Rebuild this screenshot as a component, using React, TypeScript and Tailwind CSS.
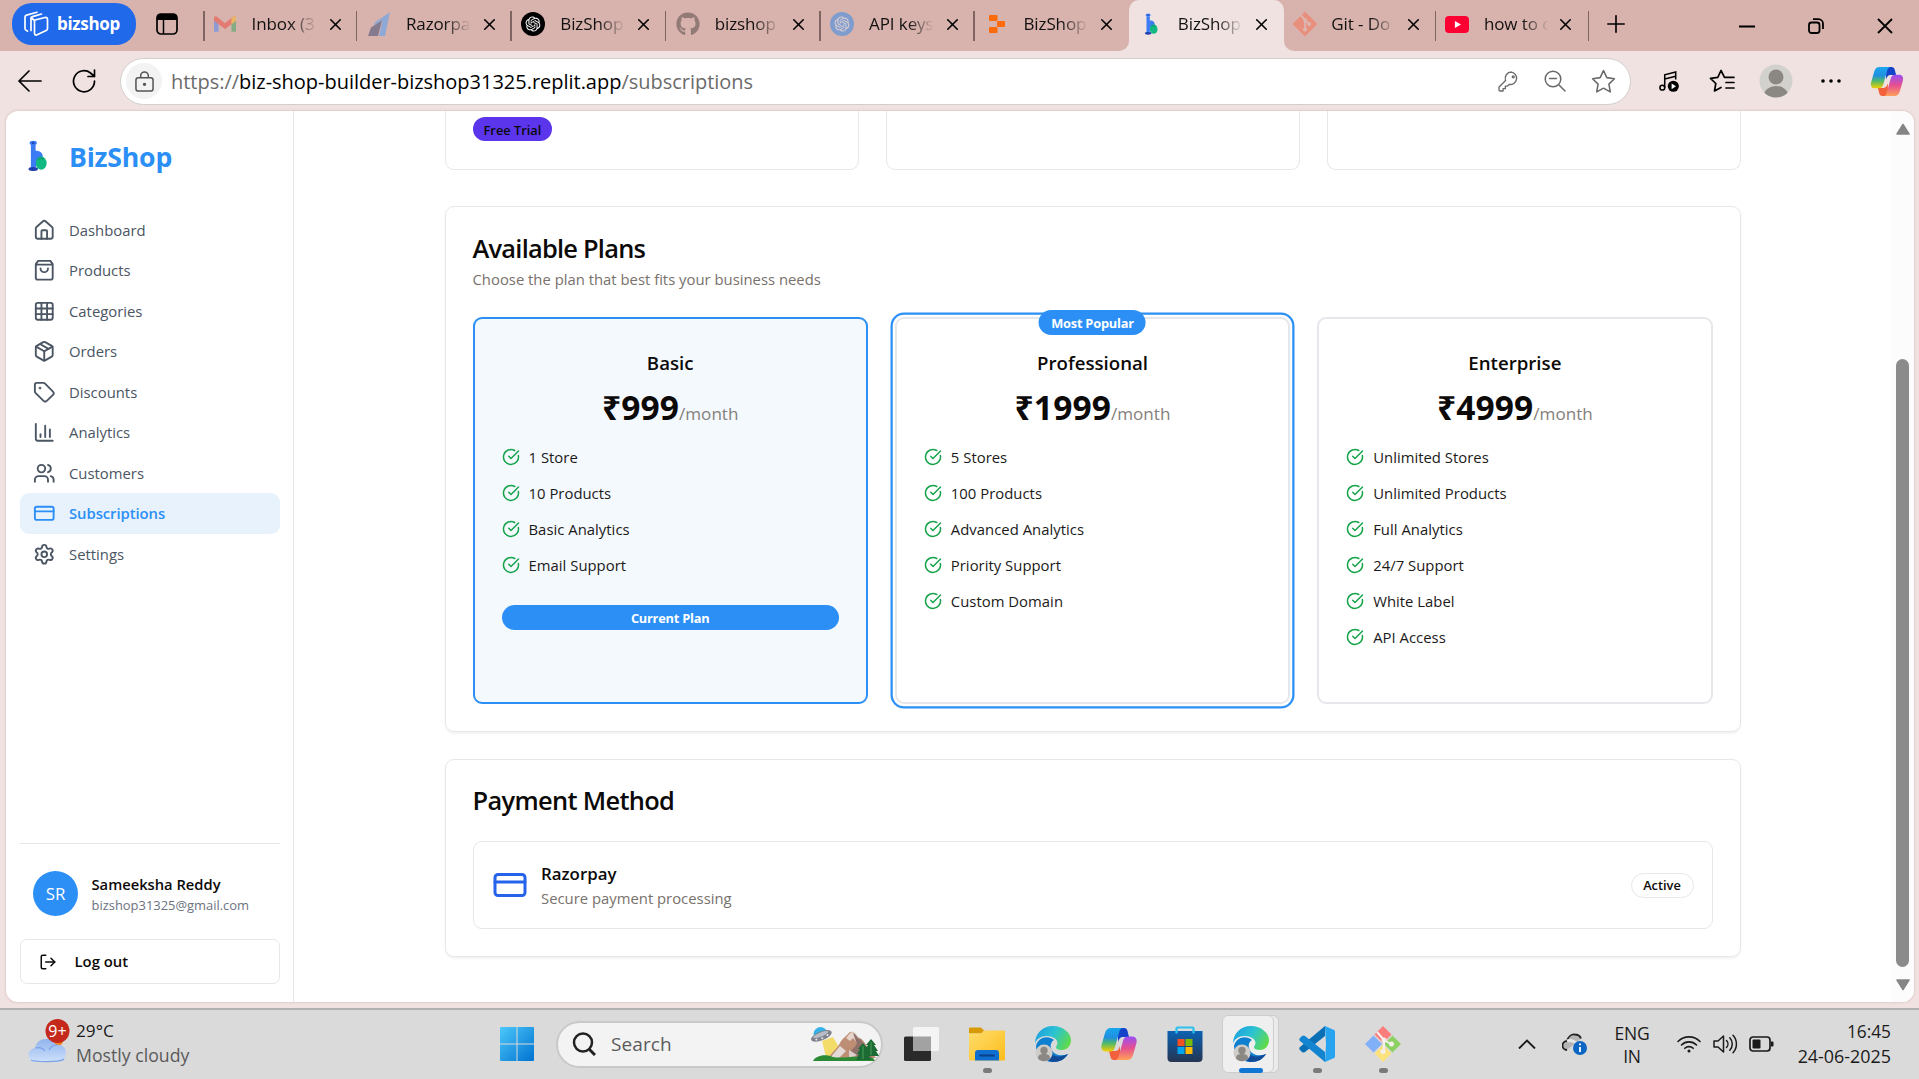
import type { ReactNode } from "react";
import {
  House,
  Grid3x3,
  Package,
  Tag,
  Users,
  CreditCard,
  Settings,
  LogOut,
  CircleCheckBig,
  Plus,
  X,
  type LucideIcon,
} from "lucide-react";
import { FaGithub } from "react-icons/fa";
import { RiOpenaiFill } from "react-icons/ri";

/* ---------- shared drawings ---------- */

function BizLogo({ className }: { className?: string }) {
  return (
    <svg viewBox="0 0 32 32" className={className}>
      <path d="M12 11c6-1 9 3 8 9l-8 8z" fill="#3b7cf5" />
      <ellipse cx="18.500" cy="23.500" rx="5.500" ry="6.800" fill="#10b981" />
      <path d="M15 20c2-2.500 4.500-2 5.500 0" stroke="#0a8f63" strokeWidth="1.200" fill="none" />
      <rect x="8" y="5" width="4.800" height="24" fill="#3b7cf5" />
      <ellipse cx="10.400" cy="3" rx="3.700" ry="2.300" fill="#3b7cf5" />
      <ellipse cx="10.400" cy="3" rx="1.500" ry="1" fill="#1e40af" />
      <ellipse cx="10.400" cy="29.500" rx="4.800" ry="2" fill="#1e40af" />
    </svg>
  );
}

function CopilotLogo({ className, id }: { className?: string; id: string }) {
  return (
    <svg viewBox="0 0 36 34" className={className}>
      <defs>
        <linearGradient id={id + "a"} x1="0" y1="0" x2="0" y2="1">
          <stop offset="0" stopColor="#19a7ef" />
          <stop offset=".4" stopColor="#1f8fe0" />
          <stop offset=".65" stopColor="#4fb86c" />
          <stop offset="1" stopColor="#f5d000" />
        </linearGradient>
        <linearGradient id={id + "b"} x1="0" y1="0" x2="0" y2="1">
          <stop offset="0" stopColor="#9a4df5" />
          <stop offset=".5" stopColor="#e6508f" />
          <stop offset="1" stopColor="#ffa257" />
        </linearGradient>
      </defs>
      <path d="M17 1h6c2 0 3 1 3.500 3l1.500 6h-6c-3 0-4 2-5 5z" fill="#1443c9" />
      <path d="M19 33h-6c-2 0-3-1-3.500-3L8 24h6c3 0 4-2 5-5z" fill="#f2603c" />
      <path d="M10 1h12c-2 0-3 1.500-3.600 3.500L14 20c-.8 3-2 4.500-5 4.500H5c-4 0-5.500-3-4.300-7L4 6c1-3.500 3-5 6-5z" fill={"url(#" + id + "a)"} />
      <path d="M26 33H14c2 0 3-1.500 3.600-3.500L22 14c.8-3 2-4.500 5-4.500h4c4 0 5.500 3 4.300 7L32 28c-1 3.500-3 5-6 5z" fill={"url(#" + id + "b)"} />
    </svg>
  );
}

/* ---------- browser tab strip ---------- */

function GmailIcon() {
  return (
    <svg viewBox="0 0 24 18" className="h-[17px] w-[22px] opacity-60">
      <path d="M0 2v15h5V7z" fill="#5b8def" />
      <path d="M24 2v15h-5V7z" fill="#4fa868" />
      <path d="M0 2c0-2 2.500-2.500 4-1l8 6.500L20 1c1.500-1.500 4-1 4 1v3l-12 9L0 5z" fill="#e9574a" />
      <path d="M19 2l1-1c1.500-1.500 4-1 4 1v3l-5 4z" fill="#f5b93a" />
    </svg>
  );
}

function RazorpayIcon() {
  return (
    <svg viewBox="0 0 22 24" className="h-6 w-[22px]">
      <path d="M22 0L7 10.500 6 14l8.500-5.500L11 24h6z" fill="#8fa9d6" />
      <path d="M3 15.500L0 24h10l4-15.500z" fill="#857b8e" />
    </svg>
  );
}

function OpenAiIcon({ blue }: { blue?: boolean }) {
  return (
    <span
      className={
        blue
          ? "flex size-6 items-center justify-center rounded-full bg-[#7e9dce] text-[#e3d0d2]"
          : "flex size-6 items-center justify-center rounded-full bg-black text-white"
      }
    >
      <RiOpenaiFill className="size-[18px]" />
    </span>
  );
}

function ReplitIcon() {
  return (
    <svg viewBox="0 0 16 18" className="ml-[2px] h-[18px] w-[16px]" fill="#fb6a0b">
      <rect width="8.500" height="6" rx="1" />
      <rect x="8" y="6" width="8" height="6" rx="1" />
      <rect y="12" width="8.500" height="6" rx="1" />
    </svg>
  );
}

function GitIcon() {
  return (
    <svg viewBox="0 0 24 24" className="size-6">
      <path d="M12 0l12 12-12 12L0 12z" fill="#e98f7d" stroke="#e98f7d" strokeLinejoin="round" />
      <g stroke="#dcb6b0" strokeWidth="1.800" fill="#dcb6b0">
        <path d="M8 3.500l4 4v10M12 8l4 4" fill="none" />
        <circle cx="12" cy="17.500" r="1.200" />
        <circle cx="16" cy="12" r="1.200" />
        <circle cx="12" cy="8" r="1" />
      </g>
    </svg>
  );
}

function YoutubeIcon() {
  return (
    <span className="flex h-[17px] w-6 items-center justify-center rounded-[4px] bg-[#ff0033]">
      <svg viewBox="0 0 8 8" className="size-[7px]">
        <path d="M1 0l7 4-7 4z" fill="#fff" />
      </svg>
    </span>
  );
}

type TabInfo = { title: string; icon: ReactNode; active?: boolean; narrow?: boolean };

const tabs: TabInfo[] = [
  { title: "Inbox (3", icon: <GmailIcon /> },
  { title: "Razorpa", icon: <RazorpayIcon /> },
  { title: "BizShop", icon: <OpenAiIcon /> },
  { title: "bizshop", icon: <FaGithub className="size-6 text-[#927a76]" /> },
  { title: "API keys", icon: <OpenAiIcon blue /> },
  { title: "BizShop", icon: <ReplitIcon /> },
  { title: "BizShop", icon: <BizLogo className="ml-[2px] size-[22px]" />, active: true },
  { title: "Git - Do", icon: <GitIcon />, narrow: true },
  { title: "how to c", icon: <YoutubeIcon />, narrow: true },
];

function Tab({ title, icon, active, narrow, divider }: TabInfo & { divider: boolean }) {
  const look = active
    ? "w-[154.4px] rounded-t-[10px] bg-[#f0e2e1]"
    : narrow
      ? "w-[152.7px]"
      : "w-[154.4px]";
  return (
    <div className={"relative flex h-[51px] shrink-0 items-center pb-[3px] " + look}>
      {active && (
        <>
          <svg viewBox="0 0 10 10" className="absolute bottom-0 left-[-10px] size-[10px]">
            <path d="M10 0v10H0a10 10 0 0010-10z" fill="#f0e2e1" />
          </svg>
          <svg viewBox="0 0 10 10" className="absolute right-[-10px] bottom-0 size-[10px]">
            <path d="M0 0v10h10A10 10 0 010 0z" fill="#f0e2e1" />
          </svg>
        </>
      )}
      <span className={narrow ? "flex w-[42px] justify-center" : "flex w-[43px] justify-center"}>{icon}</span>
      <span className="ml-[5.5px] w-[66px] overflow-hidden text-[17px] tracking-[-0.1px] whitespace-nowrap text-[#111] [mask-image:linear-gradient(to_right,#000_58%,transparent_98%)]">
        {title}
      </span>
      <X className={narrow ? "ml-[6.5px] size-[19px] text-black" : "ml-[8px] size-[19px] text-black"} strokeWidth={2} />
      {divider && <span className="absolute top-[11px] right-0 h-[30px] w-[1.5px] bg-[#7f6561]" />}
    </div>
  );
}

function TabStrip() {
  return (
    <div className="flex h-[51px] shrink-0 bg-[#d8b2ac]">
      <div className="mt-[3px] ml-[12px] flex h-[42px] w-[124px] items-center rounded-[20px] bg-[#2069ea] pl-[11px] text-white">
        <svg viewBox="0 0 26 26" className="size-[26px]" fill="none" stroke="white" strokeWidth="1.700" strokeLinejoin="round" strokeLinecap="round">
          <path d="M12 9l10-2.500c1.500-.3 2.500.4 2.500 2v9c0 1-.4 1.600-1.300 2L13.500 24c-1 .3-2-.4-2-1.500V9.500zM8 19.500V7.500c0-1 .5-1.600 1.500-1.900L18.500 3M4.500 20l-1-.5c-1-.5-1.500-1-1.500-2V6c0-1 .5-1.600 1.500-1.900L14 1.300M8 6.500l3.500 3" />
        </svg>
        <span className="ml-[8px] text-[17px] font-bold tracking-[-0.3px]">bizshop</span>
      </div>
      <svg viewBox="0 0 22 22" className="mt-[13px] ml-[20px] size-[22px]">
        <rect x="1" y="1" width="20" height="20" rx="4" fill="none" stroke="#000" strokeWidth="1.700" />
        <path d="M1 7V4a3 3 0 013-3h14a3 3 0 013 3v3z" fill="#000" />
        <path d="M7.500 7v14" stroke="#000" strokeWidth="1.500" />
      </svg>
      <div className="relative ml-[25px] flex">
        <span className="absolute top-[11px] left-0 h-[30px] w-[1.5px] bg-[#7f6561]" />
        {tabs.map((t, i) => (
          <Tab key={i} {...t} divider={!t.active && !tabs[i + 1]?.active} />
        ))}
      </div>
      <Plus className="mt-[10px] ml-[13px] size-[28px]" strokeWidth={1.4} />
      <div className="ml-auto flex items-center pr-[26px]">
        <svg viewBox="0 0 16 16" className="mr-[53px] size-4">
          <path d="M0 8.500h16" stroke="#000" strokeWidth="2" />
        </svg>
        <svg viewBox="0 0 16 16" className="mr-[53px] size-4" fill="none" stroke="#000" strokeWidth="1.800">
          <rect x="1" y="4.500" width="10.500" height="10.500" rx="2.500" />
          <path d="M5 1.200h5.500a4.500 4.500 0 014.500 4.500V11" />
        </svg>
        <svg viewBox="0 0 16 16" className="size-4">
          <path d="M1 1l14 14M15 1L1 15" stroke="#000" strokeWidth="1.800" />
        </svg>
      </div>
    </div>
  );
}

/* ---------- browser toolbar ---------- */

function Toolbar() {
  return (
    <div className="flex h-[60px] shrink-0 items-center bg-[#f0e2e1] text-black">
      <svg viewBox="0 0 24 22" className="ml-[18px] h-[22px] w-6" fill="none" stroke="#000" strokeWidth="1.700" strokeLinecap="round" strokeLinejoin="round">
        <path d="M23 11H1M11 1L1 11l10 10" />
      </svg>
      <svg viewBox="0 0 24 24" className="ml-[30px] size-6" fill="none" stroke="#000" strokeWidth="1.700" strokeLinecap="round" strokeLinejoin="round">
        <path d="M22.500 12A10.500 10.500 0 1118.500 4L22.500 7.500M22.500 1v6.500H16" />
      </svg>
      <div className="ml-[24px] flex h-[47px] w-[1511px] items-center rounded-full border-[1.5px] border-[#d2cfcb] bg-white">
        <span className="ml-[5px] flex size-9 items-center justify-center rounded-full bg-[#f3f3f3]">
          <svg viewBox="0 0 20 22" className="h-[21px] w-[19px]" fill="none" stroke="#555" strokeWidth="1.600">
            <rect x="1" y="7" width="18" height="14" rx="2.500" />
            <path d="M6 7V5a4 4 0 018 0v2" />
            <circle cx="10" cy="14" r="1" fill="#555" />
          </svg>
        </span>
        <span className="ml-[9px] pt-px text-[20px] tracking-[-0.02px] whitespace-nowrap text-[#6b6b6b]">
          https://<span className="text-black">biz-shop-builder-bizshop31325.replit.app</span>/subscriptions
        </span>
        <div className="ml-auto flex items-center pr-[14px] text-[#6a6a6a]">
          <svg viewBox="0 0 20 20" className="mr-[25px] size-[21px]" fill="none" stroke="currentColor" strokeWidth="1.300" strokeLinejoin="round">
            <path d="M12.800 1a6 6 0 00-5.600 8L1 15.200V18c0 .6.400 1 1 1h2.800v-2.200h2.200v-2.400h2l1.600-1.600A6 6 0 1012.800 1z" />
            <circle cx="14.500" cy="5.500" r=".9" />
          </svg>
          <svg viewBox="0 0 22 22" className="mr-[25px] size-[22px]" fill="none" stroke="currentColor" strokeWidth="1.500" strokeLinecap="round">
            <circle cx="9" cy="9" r="7.800" />
            <path d="M15 15l6 6M5.500 8.500h7" />
          </svg>
          <svg viewBox="0 0 24 24" className="size-[25px]" fill="none" stroke="currentColor" strokeWidth="1.500" strokeLinejoin="round">
            <path d="M12 1.500l3.200 6.800 7.300 1-5.300 5.200 1.300 7.500-6.500-3.600L5.500 22l1.300-7.500L1.500 9.300l7.300-1z" />
          </svg>
        </div>
      </div>
      <svg viewBox="0 0 22 22" className="ml-[28px] size-[21px]" fill="none" stroke="#000" strokeWidth="1.600">
        <circle cx="3.500" cy="17.500" r="2.500" />
        <path d="M6 17.500V4l11.500-3v8M6 8.500l11.500-3" />
        <circle cx="15" cy="16" r="5.800" fill="#000" stroke="none" />
        <path d="M13.200 13v6l4.600-3z" fill="#fff" stroke="none" />
      </svg>
      <svg viewBox="0 0 26 24" className="ml-[29px] h-6 w-[26px]" fill="none" stroke="#000" strokeWidth="1.700" strokeLinejoin="round" strokeLinecap="round">
        <path d="M15.500 8.300L12 1.500 8.800 8.300l-7.300 1 5.300 5.200L5.500 22l6.500-3.600M15.500 8.300H25M17 13.500h8M17 19h8" />
      </svg>
      <svg viewBox="0 0 34 34" className="ml-[24px] size-[34px]">
        <clipPath id="profile-clip"><circle cx="17" cy="17" r="16.500" /></clipPath>
        <g clipPath="url(#profile-clip)">
          <rect width="34" height="34" fill="#d3d1cd" />
          <circle cx="17" cy="13" r="7.500" fill="#8b8783" />
          <ellipse cx="17" cy="31" rx="12" ry="9" fill="#8b8783" />
        </g>
      </svg>
      <svg viewBox="0 0 20 4" className="ml-[28px] h-1 w-5">
        <circle cx="2" cy="2" r="1.800" />
        <circle cx="10" cy="2" r="1.800" />
        <circle cx="18" cy="2" r="1.800" />
      </svg>
      <CopilotLogo id="tb" className="ml-[29px] h-[31px] w-[34px]" />
    </div>
  );
}

/* ---------- sidebar ---------- */

type IconProps = { className?: string };

function BarsIcon({ className }: IconProps) {
  return (
    <svg viewBox="0 0 24 24" className={className} fill="none" stroke="currentColor" strokeWidth="2" strokeLinecap="round" strokeLinejoin="round">
      <path d="M3 3v16a2 2 0 002 2h16M18 17V9M13 17V5M8 17v-3" />
    </svg>
  );
}

function BagIcon({ className }: IconProps) {
  return (
    <svg viewBox="0 0 24 24" className={className} fill="none" stroke="currentColor" strokeWidth="2" strokeLinecap="round" strokeLinejoin="round">
      <path d="M5.500 2L3 5.500V20a2 2 0 002 2h14a2 2 0 002-2V5.500L18.500 2zM3 6h18M16 10a4 4 0 01-8 0" />
    </svg>
  );
}

const navItems: { label: string; icon: LucideIcon | typeof BarsIcon; active?: boolean }[] = [
  { label: "Dashboard", icon: House },
  { label: "Products", icon: BagIcon },
  { label: "Categories", icon: Grid3x3 },
  { label: "Orders", icon: Package },
  { label: "Discounts", icon: Tag },
  { label: "Analytics", icon: BarsIcon },
  { label: "Customers", icon: Users },
  { label: "Subscriptions", icon: CreditCard, active: true },
  { label: "Settings", icon: Settings },
];

function Sidebar() {
  return (
    <aside className="flex w-64 shrink-0 flex-col border-r border-[#e2e4e7] px-3 pb-4">
      <div className="flex h-[87.8px] items-center pb-[9px]">
        <BizLogo className="ml-[3px] size-[28px]" />
        <span className="ml-[13px] pt-[5.5px] text-[23.700px] font-bold tracking-[-0.2px] text-[#2b8ff5]">BizShop</span>
      </div>
      <nav className="flex flex-col">
        {navItems.map(({ label, icon: Icon, active }) => (
          <a
            key={label}
            className={
              active
                ? "flex h-9 items-center gap-3 rounded-lg bg-[#e8f2fd] px-3 text-[13.2px] font-semibold tracking-[-0.06px] text-[#2b8ff5]"
                : "flex h-9 items-center gap-3 rounded-lg px-3 text-[13.2px] text-[#4b5563]"
            }
          >
            <Icon className="size-5" />
            {label}
          </a>
        ))}
      </nav>
      <div className="mt-auto border-t border-[#e5e7eb] pt-6">
        <div className="flex items-center px-3">
          <span className="flex size-10 items-center justify-center rounded-full bg-[#2b8ff5] text-[15px] text-white">SR</span>
          <div className="ml-3 pt-[2px]">
            <p className="text-[13.1px] leading-4 font-semibold text-[#0c0a09]">Sameeksha Reddy</p>
            <p className="mt-[3px] text-[11.500px] leading-4 text-[#6b7280]">bizshop31325@gmail.com</p>
          </div>
        </div>
        <button className="mt-[20.5px] flex h-10 w-full items-center gap-4 rounded-md border border-[#e5e7eb] px-4 text-[13.2px] font-semibold text-[#0c0a09]">
          <LogOut className="size-4" />
          Log out
        </button>
      </div>
    </aside>
  );
}

/* ---------- subscription page ---------- */

const plans = [
  { name: "Basic", price: "₹999", features: ["1 Store", "10 Products", "Basic Analytics", "Email Support"], kind: "current" },
  { name: "Professional", price: "₹1999", features: ["5 Stores", "100 Products", "Advanced Analytics", "Priority Support", "Custom Domain"], kind: "popular" },
  { name: "Enterprise", price: "₹4999", features: ["Unlimited Stores", "Unlimited Products", "Full Analytics", "24/7 Support", "White Label", "API Access"], kind: "plain" },
];

const planStyle: Record<string, string> = {
  current: "relative rounded-lg border-2 border-[#2b8ff5] bg-[#f4f9fe] p-6",
  popular: "relative rounded-lg border-2 border-[#e5e7eb] bg-white p-6 ring-2 ring-[#2b8ff5] ring-offset-2",
  plain: "relative rounded-lg border-2 border-[#e5e7eb] bg-white p-6",
};

function PlanCard({ name, price, features, kind }: (typeof plans)[number]) {
  return (
    <div className={planStyle[kind]}>
      {kind === "popular" && (
        <span className="absolute -top-2 left-1/2 flex h-[22px] w-[95px] -translate-x-1/2 items-center justify-center rounded-full bg-[#2b8ff5] pt-[2px] text-[11.4px] font-bold tracking-[-0.2px] whitespace-nowrap text-white">
          Most Popular
        </span>
      )}
      <h3 className="h-7 pt-px text-center text-[16.600px] leading-7 font-semibold">{name}</h3>
      <p className="mt-[9px] h-9 text-center leading-9">
        <span className="text-[29.800px] font-bold tracking-[0.1px]">{price}</span>
        <span className="text-[15.200px] text-[#85807b]">/month</span>
      </p>
      <ul className="mt-4 space-y-3">
        {features.map((f) => (
          <li key={f} className="flex h-5 items-center gap-2 text-[13.2px] tracking-[0.02px] text-[#1c1a19]">
            <CircleCheckBig className="size-4 text-[#16a34a]" />
            {f}
          </li>
        ))}
      </ul>
      {kind === "current" ? (
        <span className="mt-[25.3px] flex h-[22px] items-center justify-center rounded-full bg-[#2b8ff5] pt-[2px] text-[11.4px] font-bold tracking-[-0.2px] text-white">
          Current Plan
        </span>
      ) : (
        <div className="mt-6" />
      )}
    </div>
  );
}

function SubscriptionPage() {
  return (
    <main className="min-w-0 flex-1 overflow-hidden">
      <div className="mx-auto w-[1152px] text-[#0c0a09]">
        <div className="grid grid-cols-3 gap-6">
          <div className="h-[52px] rounded-b-lg border border-t-0 border-[#e5e7eb] px-6 pt-[5px]">
            <span className="flex h-[22px] w-[71px] items-center justify-center rounded-full bg-[#5a35ec] pt-[2px] text-[11.4px] font-semibold">
              Free Trial
            </span>
          </div>
          <div className="h-[52px] rounded-b-lg border border-t-0 border-[#e5e7eb]" />
          <div className="h-[52px] rounded-b-lg border border-t-0 border-[#e5e7eb]" />
        </div>

        <section className="mt-8 rounded-lg border border-[#e5e7eb] px-6 pt-[25px] pb-6 shadow-xs">
          <h2 className="text-[22.6px] leading-6 font-semibold tracking-[-0.68px]">Available Plans</h2>
          <p className="mt-1.5 text-[13.2px] leading-5 text-[#78716c]">Choose the plan that best fits your business needs</p>
          <div className="mt-[23px] grid grid-cols-3 gap-6">
            {plans.map((p) => (
              <PlanCard key={p.name} {...p} />
            ))}
          </div>
        </section>

        <section className="mt-6 rounded-lg border border-[#e5e7eb] px-6 pt-6 pb-6 shadow-xs">
          <h2 className="text-[22.6px] leading-6 font-semibold tracking-[-0.6px]">Payment Method</h2>
          <div className="mt-[23.5px] flex h-[78.5px] items-center rounded-lg border border-[#e5e7eb] px-4">
            <CreditCard className="size-8 text-[#2563eb]" />
            <div className="ml-3">
              <p className="text-[15px] leading-6 font-semibold">Razorpay</p>
              <p className="text-[13.2px] leading-5 text-[#78716c]">Secure payment processing</p>
            </div>
            <span className="mt-[1px] ml-auto flex h-[22px] w-[56px] items-center justify-center rounded-full border border-[#e5e7eb] pt-px text-[11.4px] font-semibold">
              Active
            </span>
          </div>
        </section>
      </div>
    </main>
  );
}

function Scrollbar() {
  return (
    <div className="flex w-[23px] shrink-0 flex-col items-center bg-[#fcfcfc] pt-[12px] pb-[11px]">
      <svg viewBox="0 0 14 12" className="h-3 w-[14px]">
        <path d="M7 1.500L13 11H1z" fill="#858585" stroke="#858585" strokeWidth="1.500" strokeLinejoin="round" />
      </svg>
      <div className="mt-auto mb-[12px] h-[608px] w-[13px] rounded-full bg-[#8b8b8b]" />
      <svg viewBox="0 0 14 12" className="h-3 w-[14px]">
        <path d="M7 10.500L13 1H1z" fill="#858585" stroke="#858585" strokeWidth="1.500" strokeLinejoin="round" />
      </svg>
    </div>
  );
}

/* ---------- taskbar ---------- */

function EdgeLogo({ id }: { id: string }) {
  return (
    <svg viewBox="0 0 36 36" className="size-9">
      <defs>
        <linearGradient id={id} x1="0" y1=".2" x2="1" y2=".6">
          <stop offset="0" stopColor="#1c9fe0" />
          <stop offset=".5" stopColor="#2cc3d2" />
          <stop offset="1" stopColor="#5fdb4a" />
        </linearGradient>
      </defs>
      <path d="M1 20c0 9 7 16 17 16 7 0 12-3 15-8-7 3-15 1-17-6-1-4 1-7 3-8-6-5-16-3-18 6z" fill="#0f7fd0" />
      <path d="M14 19c-2 9 6 15 19 9-3 5-8 8-15 8-8-1-10-12-4-17z" fill="#114b98" />
      <path d="M0 18C0 7 8 0 18 0s18 7 18 14c0 6-4 10-9 10-4 0-6-1-6-3 0-1 1.500-2 1.500-4 0-4-5-7-11-7C6 10 1 13 0 18z" fill={"url(#" + id + ")"} />
      <circle cx="9" cy="27" r="8.500" fill="#cfcdc9" />
      <circle cx="9" cy="24.500" r="3.700" fill="#8b8783" />
      <path d="M3 32.500c0-4 3-4.500 6-4.500s6 .5 6 4.500c-3 3.500-9 3.500-12 0z" fill="#8b8783" />
    </svg>
  );
}

function TaskItem({ children, dot }: { children: ReactNode; dot?: boolean }) {
  return (
    <div className="relative flex h-[68px] w-[66px] shrink-0 items-center justify-center">
      {children}
      {dot && <span className="absolute bottom-[5px] left-[29px] h-[5px] w-[9px] rounded-full bg-[#7a7a7a]" />}
    </div>
  );
}

function SearchArt() {
  return (
    <svg viewBox="0 0 69 36" className="h-9 w-[69px]">
      <path d="M12 15l11-4 12 20H16z" fill="#f4dc6a" />
      <path d="M18 32c6-8 9-9 12-15 2-4 4-5 7-8 2-3 4-4 6-3 3 1 4 5 7 6 4 2 6 8 16 20z" fill="#bd8e74" />
      <path d="M43 6c-3 0-4 3-7 6l4 3 3-3 5 6 2-6c-3-1-4-5-7-6z" fill="#e6d3ca" />
      <path d="M43 7l4 11-6 7 8 8h14c-6-9-9-16-13-20-3-1-4-5-7-6z" fill="#8e7069" />
      <path d="M30 20l6 5-7 7h-9z" fill="#e4dad8" />
      <path d="M39 24l8 5-8 4z" fill="#dccfcc" />
      <path d="M3 35c2-5 12-8 20-4 9 2 20-2 40 1l2 3z" fill="#2c8a34" />
      <g fill="#1d6b34">
        <path d="M61 13l5 6h-2l4 6h-2l3 5H53l3-5h-2l4-6h-2z" />
        <path d="M53 17l5 6h-2l4 5h-2l3 6H46l3-6h-2l3-5h-2z" />
      </g>
      <path d="M53 20v13M61 16v13" stroke="#4aa05a" strokeWidth="1" />
      <g transform="rotate(-22 11 9)">
        <path d="M4 8a7 7 0 0114 0z" fill="#35b1e8" />
        <ellipse cx="11" cy="10" rx="11" ry="4.500" fill="#7f818c" />
        <ellipse cx="11" cy="8.500" rx="8" ry="2" fill="#b9bcc6" />
        <circle cx="5" cy="11.500" r="1" fill="#eee" />
        <circle cx="11" cy="12.500" r="1" fill="#eee" />
        <circle cx="17" cy="11.500" r="1" fill="#eee" />
      </g>
    </svg>
  );
}

function Taskbar() {
  return (
    <div className="flex h-[71px] shrink-0 items-center border-t-2 border-[#b0b0ae] bg-[#dadada] pb-px text-[#1a1a1a]">
      <div className="flex w-[484px] items-center pb-[2px] pl-[28px]">
        <svg viewBox="0 0 42 46" className="mb-[3px] h-[46px] w-[42px]">
          <defs>
            <linearGradient id="cloud" x1="0" y1="0" x2="0" y2="1">
              <stop offset="0" stopColor="#8fb4ee" />
              <stop offset="1" stopColor="#cfe0fb" />
            </linearGradient>
          </defs>
          <circle cx="28" cy="21" r="7" fill="#f2801e" />
          <path d="M8 43a7 7 0 01-1-14c1-6 6-9 11-9 5 0 8 2 10 6 6-1 10 3 10 8s-4 9-9 9z" fill="url(#cloud)" />
          <path d="M7 29c4-1 8 0 10 3M21 31c2-4 5-5 8-5M3 41c3 2 30 2.500 33-1" stroke="#7ba3e6" strokeWidth="1.200" fill="none" />
          <circle cx="29.500" cy="12" r="12" fill="#c5291c" />
          <text x="29.500" y="17.800" fontSize="16" textAnchor="middle" fill="#fff">9+</text>
        </svg>
        <div className="ml-[6px] leading-[24.500px]">
          <p className="text-[17.200px]">29°C</p>
          <p className="text-[17.700px] text-[#5a5a5a]">Mostly cloudy</p>
        </div>
      </div>
      <TaskItem>
        <svg viewBox="0 0 36 36" className="size-9">
          <defs>
            <linearGradient id="win" x1="0" y1="0" x2="1" y2="1">
              <stop offset="0" stopColor="#4cc8fa" />
              <stop offset="1" stopColor="#0072d0" />
            </linearGradient>
          </defs>
          <path d="M2 1h15.500v16.500H1V2a1 1 0 011-1zM18.500 1H34a1 1 0 011 1v15.500H18.500zM1 18.500h16.500V35H2a1 1 0 01-1-1zM18.500 18.500H35V34a1 1 0 01-1 1H18.500z" fill="url(#win)" />
        </svg>
      </TaskItem>
      <div className="mr-[5px] ml-[6px] flex h-[47px] w-[327px] items-center rounded-full border-2 border-[#c9c9c9] bg-[#f3f3f3] pl-[14px]">
        <svg viewBox="0 0 24 24" className="size-6" fill="none" stroke="#222" strokeWidth="2.500">
          <circle cx="11" cy="10.500" r="9" />
          <path d="M17.500 17.500L23 23" strokeWidth="3" />
        </svg>
        <span className="ml-[15px] text-[19px] tracking-[0.1px] text-[#5b5b5b]">Search</span>
        <span className="mr-[2px] ml-auto"><SearchArt /></span>
      </div>
      <TaskItem>
        <svg viewBox="0 0 36 36" className="size-9">
          <rect x="1" y="10.500" width="27" height="24.500" rx="1.500" fill="#2a2a2a" />
          <rect x="10" y="1" width="26" height="24" rx="1.500" fill="#f4f4f4" />
          <path d="M10 10.500h18V25H10z" fill="#a2a2a2" />
        </svg>
      </TaskItem>
      <TaskItem dot>
        <svg viewBox="0 0 36 34" className="h-[34px] w-9">
          <defs>
            <linearGradient id="folder" x1="0" y1="0" x2="1" y2="1">
              <stop offset="0" stopColor="#ffdd6e" />
              <stop offset="1" stopColor="#fcbd1a" />
            </linearGradient>
          </defs>
          <path d="M0 1.500a1 1 0 011-1h11l3 3-2 3H0z" fill="#d99b05" />
          <path d="M0 6.500h12l3-3h20a1 1 0 011 1v28a1 1 0 01-1 1H1a1 1 0 01-1-1z" fill="url(#folder)" />
          <path d="M6 33.500V26a3 3 0 013-3h18a3 3 0 013 3v7.500z" fill="#0f6fd0" />
          <path d="M11 28.500h14" stroke="#0a3f86" strokeWidth="1.800" strokeLinecap="round" />
        </svg>
      </TaskItem>
      <TaskItem><EdgeLogo id="edge-one" /></TaskItem>
      <TaskItem><CopilotLogo id="task" className="h-[34px] w-9" /></TaskItem>
      <TaskItem>
        <svg viewBox="0 0 36 36" className="size-9">
          <defs>
            <linearGradient id="store" x1="0" y1="0" x2="0" y2="1">
              <stop offset="0" stopColor="#0b62b3" />
              <stop offset="1" stopColor="#253552" />
            </linearGradient>
          </defs>
          <path d="M9.500 7V2.500c0-.5.500-1 1-1h15c.500 0 1 .5 1 1V7" stroke="#2cc0f0" strokeWidth="2.200" fill="none" />
          <path d="M.5 5h35v27a4 4 0 01-4 4h-27a4 4 0 01-4-4z" fill="url(#store)" />
          <path d="M9.500 5v2.500M26.500 5v2.500" stroke="#2cc0f0" strokeWidth="2.200" />
          <path d="M10.500 13h7v7h-7z" fill="#f25022" />
          <path d="M18.500 13h7v7h-7z" fill="#7fba00" />
          <path d="M10.500 21h7v7h-7z" fill="#00a4ef" />
          <path d="M18.500 21h7v7h-7z" fill="#ffb900" />
        </svg>
      </TaskItem>
      <TaskItem>
        <span className="absolute top-[5px] left-[13px] h-[58px] w-[48px] rounded-[6px] border-[1.5px] border-[#cbcbcb] bg-[#ebebeb]" />
        <span className="absolute top-[5px] left-[4px] flex h-[58px] w-[52px] items-center justify-center rounded-[6px] border-[1.5px] border-[#cdcdcd] bg-[#efefef]">
          <span className="ml-[6px]"><EdgeLogo id="edge-two" /></span>
        </span>
        <span className="absolute bottom-[5px] left-[21px] h-[5px] w-6 rounded-full bg-[#0f76d4]" />
      </TaskItem>
      <TaskItem dot>
        <svg viewBox="0 0 36 36" className="size-9">
          <path d="M26 0l9 4c.6.300 1 .8 1 1.500v25c0 .7-.4 1.200-1 1.500l-9 4L27 18z" fill="#27a3ef" />
          <path d="M26 0v10L6 26c-1 .8-2 .8-3 0l-2-2c-1-1-1-2 0-3z" fill="#0a6fb5" />
          <path d="M26 36V26L6 10c-1-.8-2-.8-3 0l-2 2c-1 1-1 2 0 3z" fill="#1384cf" />
        </svg>
      </TaskItem>
      <TaskItem dot>
        <svg viewBox="0 0 36 36" className="size-9">
          <path d="M18 0l8.500 8.500L18 17 9.500 8.500z" fill="#fb7d7b" />
          <path d="M27.500 9.500L36 18l-8.500 8.500L19 18z" fill="#8ed163" />
          <path d="M8.500 9.500L17 18l-8.500 8.500L0 18z" fill="#82b0f8" />
          <path d="M18 19l8.500 8.500L18 36l-8.500-8.500z" fill="#fbe27c" />
          <path d="M12 6l7 8v11M19 14l7 4" stroke="#f2efec" strokeWidth="2" fill="none" />
          <g fill="#f2efec">
            <circle cx="19" cy="14" r="2.500" />
            <circle cx="18" cy="25.500" r="2.500" />
            <circle cx="26.500" cy="18" r="2.500" />
          </g>
        </svg>
      </TaskItem>
      <div className="ml-auto flex items-center pr-[28px]">
        <svg viewBox="0 0 18 10" className="mr-[26px] h-[10px] w-[18px]">
          <path d="M1 9.500l8-8 8 8" stroke="#1a1a1a" strokeWidth="1.900" fill="none" />
        </svg>
        <svg viewBox="0 0 26 22" className="w-[26px]">
          <path d="M5 17a4.500 4.500 0 010-9c1-4 4-7 8-6.500 3 0 5 1.500 6 4" fill="#b5b5b5" stroke="#222" strokeWidth="1.800" />
          <path d="M5 8c5-2 8 1 13 5" stroke="#e8e8e8" strokeWidth="3" fill="none" />
          <circle cx="18" cy="15" r="7" fill="#0c66c2" />
          <path d="M18 14v5M18 10.500v1.800" stroke="#fff" strokeWidth="1.800" />
        </svg>
        <div className="ml-[22px] w-[44px] pt-px text-center text-[17.500px] leading-[23px] tracking-[-0.2px]">
          <p>ENG</p>
          <p>IN</p>
        </div>
        <svg viewBox="0 0 24 18" className="ml-[23px] h-[18px] w-6" fill="none" stroke="#1a1a1a" strokeWidth="1.600" strokeLinecap="round">
          <path d="M1 6.500a15.500 15.500 0 0122 0M4.500 10a10.500 10.500 0 0115 0M7.800 13.300a6 6 0 018.400 0" />
          <circle cx="12" cy="16" r="1.500" fill="#1a1a1a" stroke="none" />
        </svg>
        <svg viewBox="0 0 25 20" className="ml-[12px] h-5 w-[25px]" fill="none" stroke="#1a1a1a" strokeWidth="1.500" strokeLinecap="round" strokeLinejoin="round">
          <path d="M1 7v6h4l5.500 5V2L5 7zM13.500 6.500a5 5 0 010 7M16.800 3.800a9 9 0 010 12.400M20 1.200a13 13 0 010 17.600" />
        </svg>
        <svg viewBox="0 0 25 16" className="ml-[11px] h-4 w-[25px]">
          <rect x="1" y="1" width="20" height="14" rx="3" fill="none" stroke="#1a1a1a" strokeWidth="1.700" />
          <rect x="3.500" y="3.500" width="8" height="9" rx="1" fill="#1a1a1a" />
          <path d="M22 5.500h1.500a1 1 0 011 1v3a1 1 0 01-1 1H22z" fill="#1a1a1a" />
        </svg>
        <div className="w-[117px] text-right leading-[24px]">
          <p className="text-[17.300px]">16:45</p>
          <p className="text-[17.900px]">24-06-2025</p>
        </div>
      </div>
    </div>
  );
}

export default function App() {
  return (
    <div className="flex h-[1079px] w-[1919px] flex-col overflow-hidden bg-[#f0e2e1] font-['Open_Sans','Noto_Sans',sans-serif]">
      <TabStrip />
      <Toolbar />
      <div className="mr-[5px] ml-[6px] flex h-[891px] shrink-0 overflow-hidden rounded-[12px] bg-white shadow-[0_0_2px_1px_#e0cccb]">
        <div className="flex h-[792px] min-w-0 flex-1 [zoom:1.125]">
          <Sidebar />
          <SubscriptionPage />
        </div>
        <Scrollbar />
      </div>
      <div className="h-[6px] shrink-0" />
      <Taskbar />
    </div>
  );
}
